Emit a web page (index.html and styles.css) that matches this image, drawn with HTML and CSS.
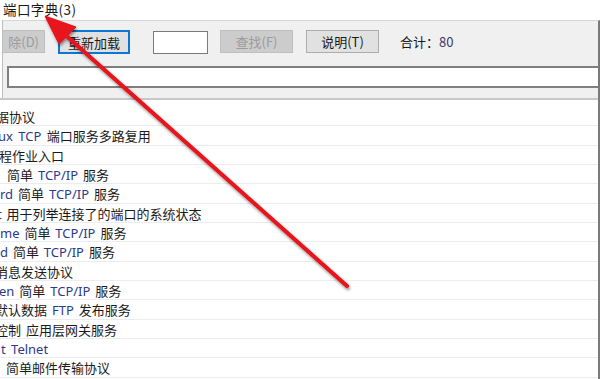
FILE: index.html
```html
<!DOCTYPE html>
<html lang="zh">
<head>
<meta charset="utf-8">
<link rel="stylesheet" href="styles.css">
</head>
<body>
<div class="window">
  <div class="tabs">
    <div class="tab">端口字典(3)</div>
  </div>
  <div class="panel">
    <div class="toolbar">
      <div class="btn disabled cut">除(D)</div>
      <div class="btn focused">重新加载</div>
      <div class="field"></div>
      <div class="btn disabled">查找(F)</div>
      <div class="btn">说明(T)</div>
      <div class="total">合计：<span class="num">80</span></div>
    </div>
    <div class="search"></div>
    <div class="list">
      <div class="row"><span class="t" style="margin-left:-4px">据协议</span></div>
      <div class="row"><span class="t lat" style="margin-left:-2px">ux TCP <span class="zh">端口服务多路复用</span></span></div>
      <div class="row"><span class="t" style="margin-left:-1px">程作业入口</span></div>
      <div class="row"><span class="t" style="margin-left:7px">简单 <span class="lat">TCP/IP</span> 服务</span></div>
      <div class="row"><span class="t"><span class="lat">rd</span> 简单 <span class="lat">TCP/IP</span> 服务</span></div>
      <div class="row"><span class="t" style="margin-left:-3px"><span class="lat">t</span> 用于列举连接了的端口的系统状态</span></div>
      <div class="row"><span class="t"><span class="lat">me</span> 简单 <span class="lat">TCP/IP</span> 服务</span></div>
      <div class="row"><span class="t"><span class="lat">d</span> 简单 <span class="lat">TCP/IP</span> 服务</span></div>
      <div class="row"><span class="t" style="margin-left:-5px">消息发送协议</span></div>
      <div class="row"><span class="t" style="margin-left:-1px"><span class="lat">en</span> 简单 <span class="lat">TCP/IP</span> 服务</span></div>
      <div class="row"><span class="t" style="margin-left:-5px">默认数据 <span class="lat">FTP</span> 发布服务</span></div>
      <div class="row"><span class="t" style="margin-left:-5px">控制 应用层网关服务</span></div>
      <div class="row"><span class="t lat" style="margin-left:1px">t Telnet</span></div>
      <div class="row"><span class="t" style="margin-left:6px">简单邮件传输协议</span></div>
    </div>
  </div>
  <svg class="arrow" width="600" height="379" viewBox="0 0 600 379">
    <defs>
      <filter id="sh" x="-10%" y="-10%" width="130%" height="130%">
        <feDropShadow dx="1" dy="2" stdDeviation="1.5" flood-color="#000" flood-opacity="0.45"/>
      </filter>
    </defs>
    <g filter="url(#sh)" fill="#e8121a" stroke="#e8121a">
      <line x1="347" y1="286" x2="62" y2="32" stroke-width="4" stroke-linecap="round"/>
      <polygon points="45,16 76,27 59,44" stroke-width="1" stroke-linejoin="round"/>
    </g>
  </svg>
</div>
</body>
</html>
```
FILE: styles.css
```css
html, body {
  margin: 0;
  padding: 0;
  background: #ffffff;
}
body {
  font-family: "Noto Sans CJK SC", "Microsoft YaHei", sans-serif;
  font-size: 13px;
  color: #1a1a1a;
}
.window {
  position: relative;
  width: 600px;
  height: 379px;
  overflow: hidden;
  background: #ffffff;
}
.tabs {
  height: 20px;
  display: flex;
  background: #ffffff;
}
.tab {
  width: 80px;
  height: 20px;
  line-height: 19px;
  padding-left: 3px;
  box-sizing: border-box;
  background: #ffffff;
  white-space: nowrap;
  font-size: 13.5px;
  letter-spacing: 0.4px;
}
.panel {
  height: 359px;
  margin-left: 2px;
  border-left: 1px solid #bdbdbd;
  border-top: 1px solid #d6d6d6;
  border-right: 2px solid #7a7a7a;
  box-sizing: border-box;
  background: #f0f0f0;
  display: flex;
  flex-direction: column;
}
.toolbar {
  height: 45px;
  display: flex;
  align-items: flex-start;
  padding-top: 9px;
  box-sizing: border-box;
}
.btn {
  height: 23px;
  box-sizing: border-box;
  border: 1px solid #adadad;
  background: #e1e1e1;
  display: flex;
  align-items: center;
  justify-content: center;
  width: 73px;
  margin-right: 13px;
  white-space: nowrap;
}
.btn.cut {
  width: 43px;
  margin-left: -1px;
  justify-content: flex-end;
  padding-right: 5px;
  margin-right: 13px;
}
.btn.disabled {
  background: #cccccc;
  border-color: #bfbfbf;
  color: #9b9b9b;
}
.btn.focused {
  border: 2px solid #0a78d4;
  width: 72px;
  height: 24px;
  margin-right: 23px;
}
.field {
  width: 55px;
  height: 23px;
  box-sizing: border-box;
  border: 1px solid #7a7a7a;
  background: #ffffff;
  margin-top: 1px;
  margin-right: 12px;
}
.total {
  margin-left: 8px;
  line-height: 23px;
  white-space: nowrap;
}
.num {
  color: #3a3a6a;
}
.search {
  height: 22px;
  margin-left: 4px;
  border: 2px solid #7f7f7f;
  border-right: none;
  background: #ffffff;
  box-sizing: border-box;
}
.list {
  margin-top: 10px;
  margin-left: -3px;
  border-top: 2px solid #c8c8c8;
  background: #ffffff;
  flex: 1;
  padding-top: 7px;
  overflow: hidden;
}
.row {
  height: 19.35px;
  box-sizing: border-box;
  border-bottom: 1px solid #ececec;
  line-height: 19px;
  white-space: nowrap;
  overflow: hidden;
}
.t {
  display: inline-block;
  word-spacing: 2px;
}
.lat {
  font-family: "Noto Sans", "Segoe UI", sans-serif;
  color: #2b3a8a;
}
.zh {
  font-family: "Noto Sans CJK SC", sans-serif;
  color: #1a1a1a;
}
.arrow {
  position: absolute;
  left: 0;
  top: 0;
  pointer-events: none;
}
```
